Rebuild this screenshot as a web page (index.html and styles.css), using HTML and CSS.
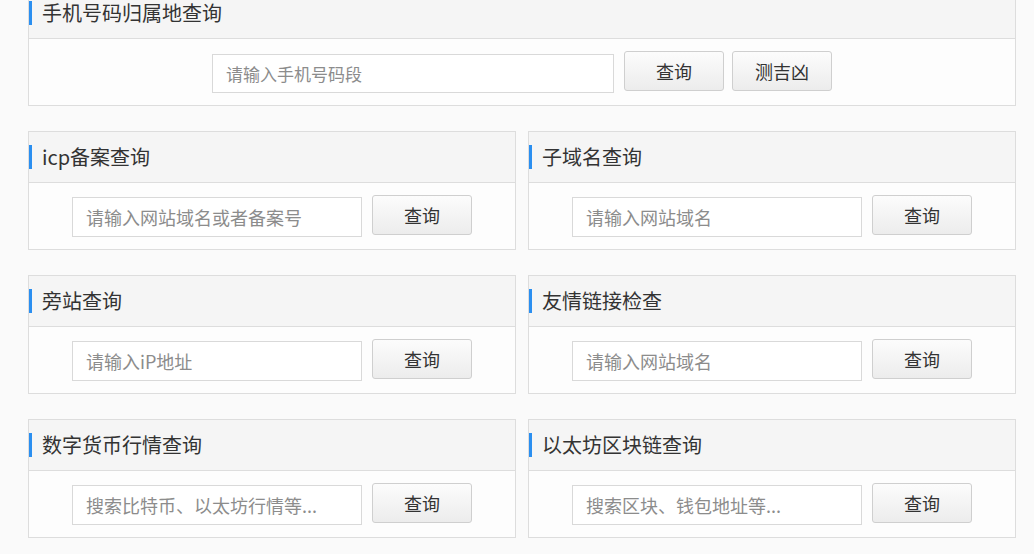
FILE: index.html
```html
<!DOCTYPE html>
<html lang="zh-CN">
<head>
<meta charset="utf-8">
<title>查询工具</title>
<link rel="stylesheet" href="styles.css">
</head>
<body>
<div class="page">
  <section class="panel panel-wide">
    <h2 class="panel-title">手机号码归属地查询</h2>
    <div class="panel-body">
      <input class="field field-wide" type="text" placeholder="请输入手机号码段">
      <button class="btn">查询</button>
      <button class="btn btn-second">测吉凶</button>
    </div>
  </section>

  <div class="grid">
    <section class="panel">
      <h2 class="panel-title">icp备案查询</h2>
      <div class="panel-body">
        <input class="field" type="text" placeholder="请输入网站域名或者备案号">
        <button class="btn">查询</button>
      </div>
    </section>
    <section class="panel">
      <h2 class="panel-title">子域名查询</h2>
      <div class="panel-body">
        <input class="field" type="text" placeholder="请输入网站域名">
        <button class="btn">查询</button>
      </div>
    </section>
    <section class="panel">
      <h2 class="panel-title">旁站查询</h2>
      <div class="panel-body">
        <input class="field" type="text" placeholder="请输入iP地址">
        <button class="btn">查询</button>
      </div>
    </section>
    <section class="panel">
      <h2 class="panel-title">友情链接检查</h2>
      <div class="panel-body">
        <input class="field" type="text" placeholder="请输入网站域名">
        <button class="btn">查询</button>
      </div>
    </section>
    <section class="panel">
      <h2 class="panel-title">数字货币行情查询</h2>
      <div class="panel-body">
        <input class="field" type="text" placeholder="搜索比特币、以太坊行情等...">
        <button class="btn">查询</button>
      </div>
    </section>
    <section class="panel">
      <h2 class="panel-title">以太坊区块链查询</h2>
      <div class="panel-body">
        <input class="field" type="text" placeholder="搜索区块、钱包地址等...">
        <button class="btn">查询</button>
      </div>
    </section>
  </div>
</div>
</body>
</html>
```

FILE: styles.css
```css
html, body {
  margin: 0;
  padding: 0;
  background: #fafafa;
  font-family: "Noto Sans CJK SC", "Noto Sans", sans-serif;
  color: #333;
  overflow: hidden;
}

.page {
  width: 988px;
  margin: -13px 0 0 28px;
}

.panel {
  border: 1px solid #dddddd;
  background: #fdfdfd;
  box-sizing: border-box;
}

.panel-wide {
  margin-bottom: 25px;
}

.grid {
  display: grid;
  grid-template-columns: 488px 488px;
  column-gap: 12px;
  row-gap: 25px;
}

.panel-title {
  margin: 0;
  height: 50px;
  border-bottom: 1px solid #dddddd;
  background: #f5f5f5;
  font-size: 20px;
  font-weight: normal;
  line-height: 50px;
  color: #333;
  display: flex;
  align-items: center;
}

.panel-title::before {
  content: "";
  width: 3px;
  height: 24px;
  background: #2b8ff0;
  margin-right: 10px;
}

.panel-body {
  height: 66px;
  box-sizing: border-box;
  padding-top: 12px;
  display: flex;
  justify-content: center;
  align-items: flex-start;
}

.field {
  width: 290px;
  height: 40px;
  margin-top: 2px;
  margin-right: 10px;
  box-sizing: border-box;
  border: 1px solid #d9d9d9;
  background: #fff;
  padding: 0 13px;
  font-family: "Noto Sans CJK SC", "Noto Sans", sans-serif;
  font-size: 18px;
  color: #333;
  outline: none;
}

.field::placeholder {
  color: #8c8c8c;
}

.field-wide {
  width: 402px;
  height: 39px;
  margin-top: 3px;
  margin-right: 10px;
  font-size: 17px;
}

.btn {
  width: 100px;
  height: 40px;
  box-sizing: border-box;
  border: 1px solid #cfcfcf;
  border-radius: 3px;
  background: linear-gradient(#fcfcfc, #ececec);
  font-family: "Noto Sans CJK SC", "Noto Sans", sans-serif;
  font-size: 18px;
  color: #333;
  padding: 0;
  cursor: pointer;
}

.btn-second {
  margin-left: 8px;
}
```
